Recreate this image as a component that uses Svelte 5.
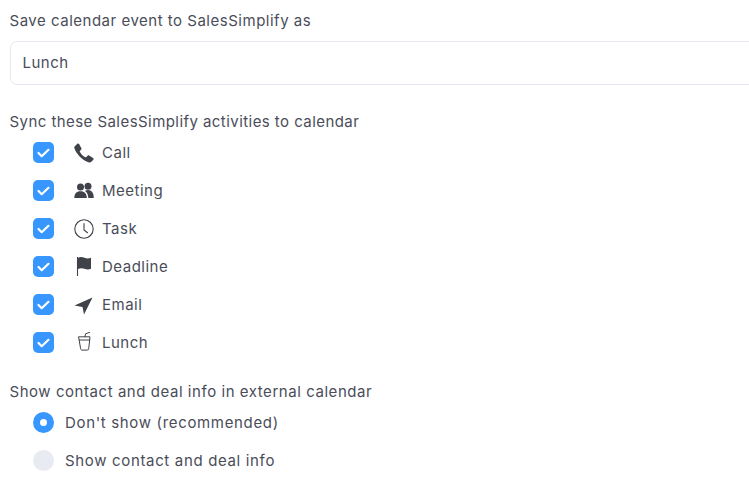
<script>
  const activities = ['Call', 'Meeting', 'Task', 'Deadline', 'Email', 'Lunch'];
</script>

<main class="page">
  <section class="field">
    <div class="label">Save calendar event to SalesSimplify as</div>
    <input class="input" value="Lunch" />
  </section>

  <section class="sync">
    <div class="label sync-label">Sync these SalesSimplify activities to calendar</div>
    <ul class="list">
      {#each activities as name}
        <li class="row">
          <span class="check">
            <svg viewBox="0 0 21 21" width="21" height="21"><path d="M5.500 11l3.200 3.200L15.500 7.800" fill="none" stroke="#fff" stroke-width="2.200" stroke-linecap="round" stroke-linejoin="round"/></svg>
          </span>
          <span class="icon">
            {#if name === 'Call'}
              <svg viewBox="0 0 20 20" width="20" height="20"><path d="M.8 3.200 3.300.7c.6-.5 1.400-.4 1.800.3l2.300 4.200c.3.500.2 1-.2 1.400L5.900 8c-.2.200-.2.500-.1.700 1 2 3.300 4.500 5.500 5.600.3.100.6.100.8-.1l1.500-1.500c.4-.4 1-.5 1.500-.2l3.900 2.400c.7.400.8 1.200.3 1.800l-1.900 2.100c-.6.600-1.400.9-2.300.7C8.300 17.500 2.200 10.800.3 5c-.2-.7 0-1.300.5-1.800z" fill="#3f4249"/></svg>
            {:else if name === 'Meeting'}
              <svg viewBox="0 0 20 20" width="20" height="20"><circle cx="6.500" cy="6" r="3.500" fill="#3f4249"/><circle cx="14" cy="5.300" r="3.500" fill="#3f4249"/><path d="M.3 17c0-4.200 2.200-6.700 6.200-6.700s6.300 2.500 6.300 6.700z" fill="#3f4249"/><path d="M11 10c1-.7 2-1 3-1 3.500 0 5.800 2.900 5.800 8H14.300c0-2.900-1.100-5.400-3.300-7z" fill="#3f4249"/></svg>
            {:else if name === 'Task'}
              <svg viewBox="0 0 20 20" width="20" height="20"><circle cx="10" cy="10" r="9.200" fill="none" stroke="#3f4249" stroke-width="1.100"/><path d="M10 4.500V11L13.500 13.700" fill="none" stroke="#3f4249" stroke-width="1.100" stroke-linecap="round"/></svg>
            {:else if name === 'Deadline'}
              <svg viewBox="0 0 20 20" width="20" height="20"><path d="M3.500 0v19" stroke="#3f4249" stroke-width="1.100" fill="none"/><path d="M4 .8c2-1 4.500-.8 6.500 0s4.300.9 6.500 0v11c-2.200.9-4.500.8-6.500 0S6 11 4 12z" fill="#3f4249"/></svg>
            {:else if name === 'Email'}
              <svg viewBox="0 0 20 20" width="20" height="20"><path d="M18.500 2.500 10 19.500 8.500 12 .5 10.500z" fill="#3f4249"/></svg>
            {:else}
              <svg viewBox="0 0 20 20" width="20" height="20"><path d="M5 4.800h11l-1.300 12c-.1.800-.6 1.300-1.400 1.300H8c-.8 0-1.300-.5-1.400-1.300zM5.300 8h10.400M11 4.800l.5-3 4.300-1.500" fill="none" stroke="#3f4249" stroke-width="1" stroke-linejoin="round" stroke-linecap="round"/></svg>
            {/if}
          </span>
          <span class="text">{name}</span>
        </li>
      {/each}
    </ul>
  </section>

  <section class="show">
    <div class="label show-label">Show contact and deal info in external calendar</div>
    <div class="radios">
      <div class="row"><span class="radio on"></span><span class="text">Don't show (recommended)</span></div>
      <div class="row"><span class="radio"></span><span class="text">Show contact and deal info</span></div>
    </div>
  </section>
</main>

<style>
  :global(body) {
    margin: 0;
    background: #fff;
    overflow: hidden;
  }
  .page {
    width: 749px;
    height: 491px;
    overflow: hidden;
    padding: 10px 0 0 9.500px;
    box-sizing: border-box;
    font-family: "Inter", "Noto Sans", sans-serif;
    font-size: 15px;
    color: #4a4d59;
  }
  .label {
    height: 22px;
    line-height: 22px;
    letter-spacing: 0.510px;
  }
  .sync-label { letter-spacing: 0.440px; }
  .show-label { letter-spacing: 0.550px; }
  .input {
    display: block;
    box-sizing: border-box;
    width: 760px;
    height: 44px;
    margin-top: 9px;
    padding: 0 12px 1px;
    border: 1px solid #e6e8f0;
    border-radius: 7px;
    font: inherit;
    letter-spacing: 0.500px;
    color: #4a4d59;
    background: #fff;
    outline: none;
  }
  .sync { margin-top: 26px; }
  .list {
    list-style: none;
    margin: 1px 0 0;
    padding: 0 0 0 23.500px;
  }
  .row {
    display: flex;
    align-items: center;
    height: 37.900px;
  }
  .check {
    width: 21px;
    height: 21px;
    border-radius: 5px;
    background: #3797ff;
    display: flex;
  }
  .icon {
    margin-left: 20px;
    width: 20px;
    height: 20px;
    display: flex;
  }
  .icon + .text { margin-left: 8px; letter-spacing: 0.500px; }
  .show { margin-top: 20px; }
  .radios { padding-left: 23.500px; }
  .radio {
    width: 21px;
    height: 21px;
    border-radius: 50%;
    background: #e9ebf2;
    box-sizing: border-box;
    margin-right: 11px;
  }
  .radio.on {
    border: 7px solid #3797ff;
    background: #fff;
  }
  .radios .text { letter-spacing: 0.660px; }
</style>
